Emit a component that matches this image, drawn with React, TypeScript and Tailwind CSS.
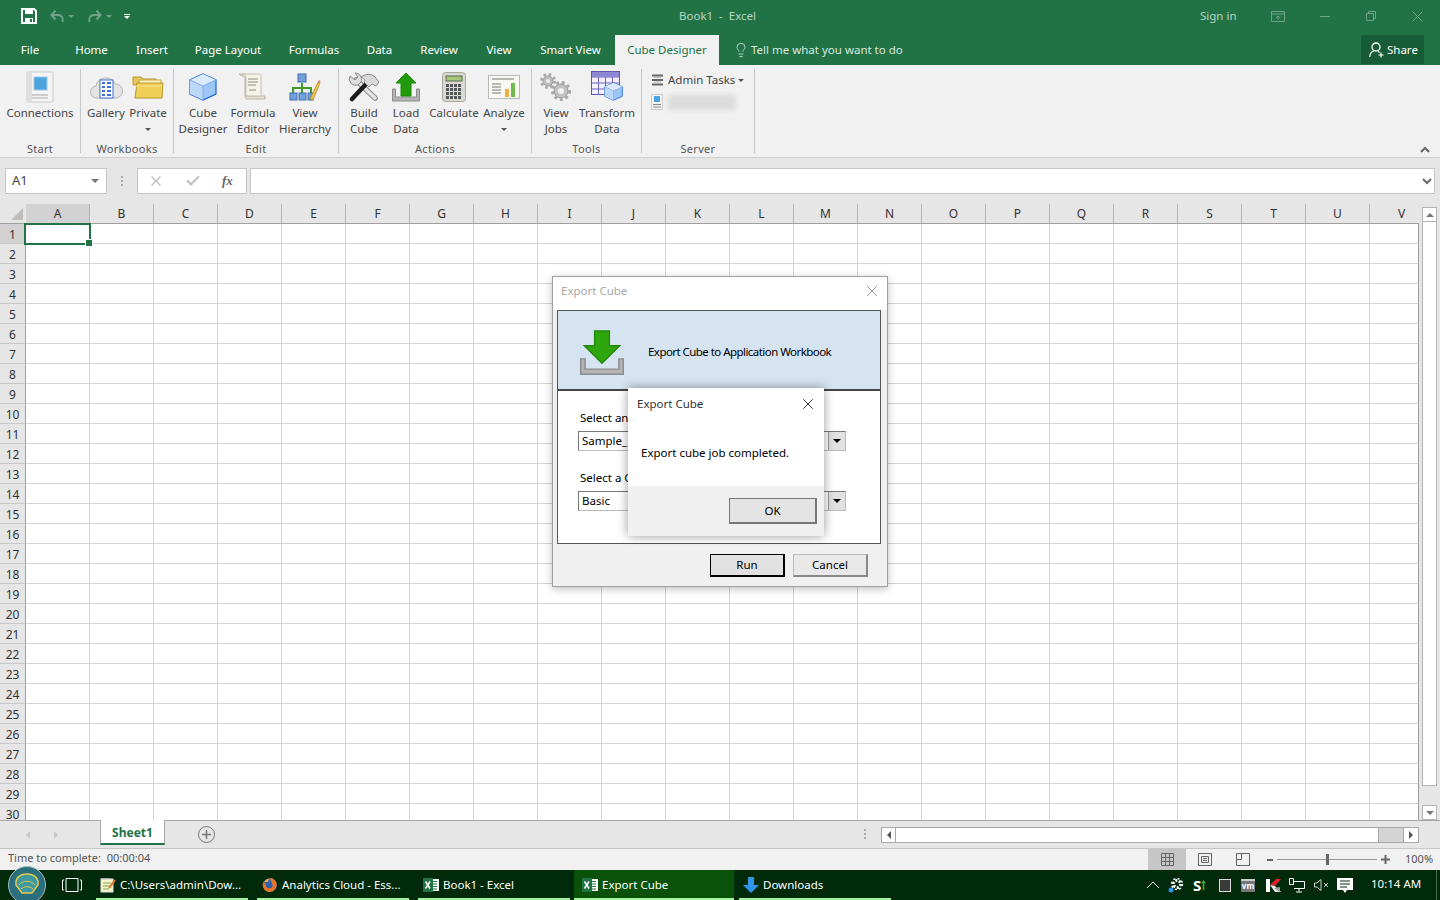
import React from "react"
import { Check, Lightbulb, X } from "lucide-react"

const columns = "ABCDEFGHIJKLMNOPQRSTUV".split("")
const rows = Array.from({ length: 30 }, (_, i) => i + 1)

const tabs = [
  { label: "File", w: "w-[60px]" },
  { label: "Home", w: "w-[63px]" },
  { label: "Insert", w: "w-[58px]" },
  { label: "Page Layout", w: "w-[94px]" },
  { label: "Formulas", w: "w-[78px]" },
  { label: "Data", w: "w-[53px]" },
  { label: "Review", w: "w-[66px]" },
  { label: "View", w: "w-[54px]" },
  { label: "Smart View", w: "w-[89px]" },
]

function SaveIcon() {
  return (
    <svg width="16" height="16" viewBox="0 0 16 16">
      <path d="M1 1h12l2 2v12H1z" fill="none" stroke="#fff" strokeWidth="2" />
      <rect x="4" y="1" width="8" height="5" fill="#fff" />
      <rect x="4" y="10" width="8" height="5" fill="#fff" />
      <rect x="9" y="11" width="2" height="3" fill="#217346" />
    </svg>
  )
}

function UndoIcon({ flip }: { flip?: boolean }) {
  return (
    <svg width="14" height="14" viewBox="0 0 14 14" className={flip ? "-scale-x-100" : ""}>
      <path d="M12.5 13c1-4-1-7-4.500-7H2M5.500 1.500 1.500 6l4 4.500" fill="none" stroke="#6fa287" strokeWidth="2" />
    </svg>
  )
}

function Caret({ className }: { className: string }) {
  return <span className={`inline-block w-0 h-0 border-x-[3px] border-x-transparent border-t-[3px] ${className}`} />
}

function ConnectionsIcon() {
  return (
    <svg width="28" height="32" viewBox="0 0 28 32">
      <rect x="1" y="1" width="26" height="30" rx="1" fill="#f4f4f4" stroke="#c9c9c9" />
      <rect x="1" y="1" width="5" height="30" fill="#dedede" />
      <rect x="8" y="6" width="13" height="13" fill="#4ca3e0" stroke="#9fc9e6" />
      <path d="M6 24h16M6 27h16" stroke="#a8a8a8" />
    </svg>
  )
}

function GalleryIcon() {
  return (
    <svg width="34" height="28" viewBox="0 0 34 28">
      <path d="M8 25a6 6 0 0 1-1-12 10 10 0 0 1 19-2 7 7 0 0 1 1 14z" fill="#e4e4e4" stroke="#b5b5b5" />
      <rect x="11" y="7" width="13" height="18" fill="#fff" stroke="#3f6fd1" />
      <path d="M13 10h3M18 10h4M13 14h3M18 14h4M13 18h3M18 18h4M13 22h3M18 22h4" stroke="#3f6fd1" strokeWidth="2" />
    </svg>
  )
}

function FolderIcon() {
  return (
    <svg width="32" height="26" viewBox="0 0 32 26">
      <path d="M1 3h8l2 2h13v6H1z" fill="#e8c65a" stroke="#b8962e" />
      <path d="M7 6h22v8H7z" fill="#fff4c4" stroke="#c9a83f" />
      <path d="M5 9h26l-1 15H3z" fill="#f1cf58" stroke="#b8962e" />
      <path d="M4 12h26" stroke="#fbe795" />
    </svg>
  )
}

function CubeIcon({ size = 28 }: { size?: number }) {
  return (
    <svg width={size} height={size} viewBox="0 0 28 28">
      <path d="M14 1 27 7v14l-13 6-13-6V7z" fill="#9cc6f5" stroke="#1d63d6" strokeWidth="1.200" />
      <path d="M14 1 27 7l-13 6L1 7z" fill="#dbeafc" />
      <path d="M14 13v14L1 21V7z" fill="#bcd8f8" />
      <path d="M1 7l13 6 13-6M14 13v14" fill="none" stroke="#7fb0ec" />
    </svg>
  )
}

function ScrollIcon() {
  return (
    <svg width="30" height="28" viewBox="0 0 30 28">
      <path d="M1 1h4c3 0 3 3 3 5v17h19v3H9c-2 0-2-2-2-3V6C7 4 6 3 4 3z" fill="#e5e2d4" stroke="#b8b5a6" />
      <path d="M4 1h17c2 0 2 2 2 3v19H8V6c0-2 0-5-4-5z" fill="#f6f4e9" stroke="#c3c0b0" />
      <path d="M10 6h10M10 9h10M10 12h8M11 17h7" stroke="#8a8a80" />
    </svg>
  )
}

function HierarchyIcon() {
  return (
    <svg width="32" height="28" viewBox="0 0 32 28">
      <path d="M13 10v5M4 22v-7h18v7M13 15v7" fill="none" stroke="#3f9a2a" strokeWidth="2" />
      <rect x="9" y="1" width="8" height="8" fill="#6f9fdc" stroke="#3f6fb0" />
      <rect x="1" y="20" width="7" height="7" fill="#6f9fdc" stroke="#3f6fb0" />
      <rect x="10" y="20" width="7" height="7" fill="#6f9fdc" stroke="#3f6fb0" />
      <rect x="19" y="20" width="5" height="7" fill="#6f9fdc" stroke="#3f6fb0" />
      <path d="M21 26 29 9l2 1-7 17z" fill="#f0c040" stroke="#9a7a20" strokeWidth=".6" />
      <path d="M29 9l.7-2 1.800.9-.5 2z" fill="#e07a9a" />
    </svg>
  )
}

function ToolsIcon() {
  return (
    <svg width="32" height="30" viewBox="0 0 32 30">
      {/* wrench */}
      <path d="M8 8 27 26" stroke="#8a8a8a" strokeWidth="5.500" strokeLinecap="round" />
      <path d="M8 8 27 26" stroke="#e4e4e4" strokeWidth="3.500" strokeLinecap="round" />
      <path d="M2 4a6.500 6.500 0 0 0 8 9l3-3a6.500 6.500 0 0 0-6-9l3 4-3 3z" fill="#dedede" stroke="#8a8a8a" />
      {/* hammer */}
      <path d="M4 27 19 11" stroke="#1c1c1c" strokeWidth="4.500" strokeLinecap="round" />
      <path d="M13 5c5-4 11-3 14 0l4 5-3 4-4-2-3 3-5-5 1-2c-1-1-2-2-4-3z" fill="#d8d8d8" stroke="#8a8a8a" />
    </svg>
  )
}

function ArrowTray() {
  return (
    <svg width="30" height="30" viewBox="0 0 30 30">
      <path d="M1.500 17v12h27V17h-3v8h-21v-8z" fill="#b4b4b4" stroke="#8c8c8c" />
      <path d="M15 1 25 11h-5v13h-10V11H5z" fill="#229a0a" stroke="#1a8a06" />
    </svg>
  )
}

function CalcIcon() {
  return (
    <svg width="24" height="30" viewBox="0 0 24 30">
      <rect x=".5" y=".5" width="23" height="29" rx="3" fill="#d9d9d2" stroke="#a8a8a0" />
      <rect x="4" y="4" width="16" height="5" fill="#a9c77a" stroke="#5f6b50" />
      {[12, 16, 20, 24].map((y) =>
        [4, 8, 12, 16].map((x) => <rect key={`${x}-${y}`} x={x} y={y} width="3" height="3" fill="#55585a" />)
      )}
    </svg>
  )
}

function AnalyzeIcon() {
  return (
    <svg width="32" height="24" viewBox="0 0 32 24">
      <rect x=".5" y=".5" width="31" height="23" fill="#f9f9f4" stroke="#b8b8b8" />
      <path d="M4 4h22M4 9h9M4 12h9M4 15h9M4 18h9" stroke="#777" />
      <rect x="17" y="14" width="4" height="8" fill="#eeb23a" />
      <rect x="23" y="8" width="4" height="14" fill="#6fbb52" />
    </svg>
  )
}

function GearsIcon() {
  return (
    <svg width="32" height="30" viewBox="0 0 32 30">
      <circle cx="8" cy="9" r="5" fill="#bdbdbd" stroke="#9a9a9a" strokeWidth="1" />
      <circle cx="8" cy="9" r="6.500" fill="none" stroke="#a8a8a8" strokeWidth="3" strokeDasharray="2.500 2.600" />
      <circle cx="8" cy="9" r="2" fill="#f1f1f1" />
      <circle cx="21" cy="19" r="7" fill="#c2c2c2" stroke="#9a9a9a" />
      <circle cx="21" cy="19" r="8.500" fill="none" stroke="#a8a8a8" strokeWidth="3" strokeDasharray="2.800 3" />
      <circle cx="21" cy="19" r="3" fill="#f1f1f1" />
    </svg>
  )
}

function TransformIcon() {
  return (
    <svg width="32" height="32" viewBox="0 0 32 32">
      <rect x=".5" y=".5" width="28" height="23" fill="#f3f0fb" stroke="#5d55ad" />
      <path d="M.5 6h28M.5 12h28M.5 18h28M7.500 0v24M14.500 0v24M21.500 0v24" stroke="#6d65bd" />
      <rect x="1" y="1" width="27" height="5" fill="#8f88d2" />
      <g transform="translate(13 11)">
        <CubeIcon size={19} />
      </g>
    </svg>
  )
}

function RibbonButton({ w, lines, caret, children }: { w: string; lines: string[]; caret?: boolean; children: React.ReactNode }) {
  return (
    <div className={`${w} flex flex-col items-center`}>
      <div className="h-[36px] flex items-center justify-center">{children}</div>
      <div className="text-[11.500px] leading-[16px] text-[#444] text-center whitespace-nowrap">
        {lines.map((l) => (
          <div key={l}>{l}</div>
        ))}
      </div>
      {caret && <Caret className="mt-[7px] border-t-[#555]" />}
    </div>
  )
}

function RibbonGroup({ w, pl, label, children }: { w: string; pl: string; label: string; children: React.ReactNode }) {
  return (
    <div className={`${w} ${pl} relative h-[84px] mt-[4px] border-r border-[#c6c6c6] shrink-0`}>
      <div className="flex">{children}</div>
      <div className="absolute left-0 right-0 bottom-[-3px] text-center text-[11px] leading-[14px] tracking-[0.3px] text-[#555]">{label}</div>
    </div>
  )
}

function Ribbon() {
  return (
    <div className="h-[93px] bg-[#f1f1f1] border-b border-[#d0d0d0] flex shrink-0 relative">
      <RibbonGroup w="w-[81px]" pl="pl-[4px]" label="Start">
        <RibbonButton w="w-[72px]" lines={["Connections"]}>
          <ConnectionsIcon />
        </RibbonButton>
      </RibbonGroup>
      <RibbonGroup w="w-[93px]" pl="pl-[4px]" label="Workbooks">
        <RibbonButton w="w-[42px]" lines={["Gallery"]}>
          <GalleryIcon />
        </RibbonButton>
        <RibbonButton w="w-[42px]" lines={["Private"]} caret>
          <FolderIcon />
        </RibbonButton>
      </RibbonGroup>
      <RibbonGroup w="w-[165px]" pl="pl-[4px]" label="Edit">
        <RibbonButton w="w-[50px]" lines={["Cube", "Designer"]}>
          <CubeIcon />
        </RibbonButton>
        <RibbonButton w="w-[50px]" lines={["Formula", "Editor"]}>
          <ScrollIcon />
        </RibbonButton>
        <RibbonButton w="w-[54px]" lines={["View", "Hierarchy"]}>
          <HierarchyIcon />
        </RibbonButton>
      </RibbonGroup>
      <RibbonGroup w="w-[193px]" pl="pl-[4px]" label="Actions">
        <RibbonButton w="w-[42px]" lines={["Build", "Cube"]}>
          <ToolsIcon />
        </RibbonButton>
        <RibbonButton w="w-[42px]" lines={["Load", "Data"]}>
          <ArrowTray />
        </RibbonButton>
        <RibbonButton w="w-[54px]" lines={["Calculate"]}>
          <CalcIcon />
        </RibbonButton>
        <RibbonButton w="w-[46px]" lines={["Analyze"]} caret>
          <AnalyzeIcon />
        </RibbonButton>
      </RibbonGroup>
      <RibbonGroup w="w-[110px]" pl="pl-[4px]" label="Tools">
        <RibbonButton w="w-[40px]" lines={["View", "Jobs"]}>
          <GearsIcon />
        </RibbonButton>
        <RibbonButton w="w-[62px]" lines={["Transform", "Data"]}>
          <TransformIcon />
        </RibbonButton>
      </RibbonGroup>
      <RibbonGroup w="w-[113px]" pl="pl-[9px]" label="Server">
        <div className="flex flex-col">
          <div className="flex items-center h-[18px] mt-[2px] text-[11.500px] text-[#444]">
            <svg width="13" height="12" viewBox="0 0 13 12" className="mr-[4px]">
              <path d="M1 1.500h11M1 6h11M1 10.500h11" stroke="#666" strokeWidth="2" />
              <path d="M3 3.500h7M3 8h7" stroke="#bbb" />
            </svg>
            Admin Tasks
            <Caret className="ml-[3px] border-t-[#555]" />
          </div>
          <div className="flex items-center mt-[5px]">
            <svg width="12" height="16" viewBox="0 0 12 16">
              <rect x=".5" y=".5" width="11" height="15" fill="#f4f4f4" stroke="#ccc" />
              <rect x="3" y="2" width="6" height="6" fill="#4ca3e0" />
              <path d="M2 10.500h8M2 13h8" stroke="#888" />
            </svg>
            <div className="ml-[5px] w-[68px] h-[15px] bg-[#dcdcdc] blur-[2px]" />
          </div>
        </div>
      </RibbonGroup>
      <svg width="10" height="7" viewBox="0 0 10 7" className="absolute right-[10px] bottom-[4px]">
        <path d="M1 6 5 2l4 4" fill="none" stroke="#666" strokeWidth="2" />
      </svg>
    </div>
  )
}

function FormulaBar() {
  return (
    <div className="h-[46px] bg-[#e6e6e6] shrink-0 flex items-start pt-[10px] pl-[5px] pr-[5px]">
      <div className="w-[102px] h-[26px] bg-white border border-[#c6c6c6] flex items-center justify-between pl-[6px] pr-[7px] text-[13px] text-[#444]">
        A1
        <Caret className="!border-x-[4px] !border-t-[4px] border-t-[#777]" />
      </div>
      <div className="w-[30px] h-[26px] flex flex-col items-center justify-center gap-[2px]">
        <span className="w-[2px] h-[2px] bg-[#aaa]" />
        <span className="w-[2px] h-[2px] bg-[#aaa]" />
        <span className="w-[2px] h-[2px] bg-[#aaa]" />
      </div>
      <div className="w-[110px] h-[26px] bg-white border border-[#c6c6c6] flex items-center text-[#c4c4c4]">
        <X size={16} strokeWidth={2.500} className="ml-[10px]" />
        <Check size={16} strokeWidth={3.500} className="ml-[21px]" />
        <span className="ml-[21px] font-['Liberation_Serif',serif] italic font-bold text-[13px] text-[#666]">fx</span>
      </div>
      <div className="ml-[3px] flex-1 h-[26px] bg-white border border-[#c6c6c6] flex items-center justify-end pr-[2px]">
        <svg width="10" height="7" viewBox="0 0 10 7">
          <path d="M1 1l4 4 4-4" fill="none" stroke="#666" strokeWidth="2" />
        </svg>
      </div>
    </div>
  )
}

function Sheet() {
  return (
    <div className="flex-1 min-h-0 flex bg-[#e6e6e6]">
      <div className="w-[1419px] overflow-hidden relative">
        <div className="flex h-[20px] border-b border-[#9f9f9f]">
          <div className="w-[26px] shrink-0 relative">
            <span className="absolute right-[3px] bottom-[3px] w-0 h-0 border-l-[12px] border-l-transparent border-b-[12px] border-b-[#bdbdbd]" />
          </div>
          {columns.map((c) => (
            <div
              key={c}
              className={`w-[64px] shrink-0 border-r border-[#b4b4b4] flex items-center justify-center text-[12px] text-[#333] ${c === "A" ? "bg-[#d2d2d2]" : ""}`}
            >
              {c}
            </div>
          ))}
        </div>
        {rows.map((r) => (
          <div key={r} className="flex h-[20px] bg-white">
            <div className={`w-[26px] shrink-0 border-r border-[#9f9f9f] border-b border-b-[#c8c8c8] flex items-center justify-center pt-[2px] text-[12px] text-[#333] ${r === 1 ? "bg-[#d2d2d2] text-[#7a6a20]" : "bg-[#e6e6e6]"}`}>
              {r}
            </div>
            {columns.map((c) => (
              <div key={c} className="w-[64px] shrink-0 border-r border-b border-[#d4d4d4]" />
            ))}
          </div>
        ))}
        <div className="absolute left-[24px] top-[19px] w-[67px] h-[22px] border-2 border-[#217346]">
          <span className="absolute right-[-4px] bottom-[-4px] w-[6px] h-[6px] bg-[#217346] border border-white box-content" />
        </div>
        <div className="absolute right-0 top-[19px] bottom-0 w-px bg-[#9f9f9f]" />
      </div>
      <div className="flex-1 flex flex-col items-center pt-[3px]">
        <div className="w-[15px] h-[15px] bg-white border border-[#b4b4b4] flex items-center justify-center">
          <span className="w-0 h-0 border-x-[4px] border-x-transparent border-b-[4px] border-b-[#777]" />
        </div>
        <div className="w-[15px] h-[564px] bg-white border border-[#b4b4b4] border-t-0" />
        <div className="flex-1" />
        <div className="w-[15px] h-[15px] bg-white border border-[#b4b4b4] flex items-center justify-center">
          <Caret className="!border-x-[4px] !border-t-[4px] border-t-[#777]" />
        </div>
      </div>
    </div>
  )
}

function SheetTabs() {
  return (
    <div className="h-[29px] shrink-0 bg-[#e6e6e6] border-y border-[#a8a8a8] border-b-[#c6c6c6] flex items-start">
      <div className="w-[100px] h-full flex items-center pl-[26px] gap-[24px]">
        <span className="w-0 h-0 border-y-[4px] border-y-transparent border-r-[4px] border-r-[#c8c8c8]" />
        <span className="w-0 h-0 border-y-[4px] border-y-transparent border-l-[4px] border-l-[#c8c8c8]" />
      </div>
      <div className="w-[65px] h-[25px] -mt-px bg-white border-x border-[#a8a8a8] border-b-2 border-b-[#217346] flex items-center justify-center pt-[3px] text-[12px] font-bold text-[#217346]">
        Sheet1
      </div>
      <div className="w-[17px] h-[17px] ml-[33px] mt-[5px] rounded-full border border-[#777] flex items-center justify-center text-[#777]">
        <svg width="9" height="9" viewBox="0 0 9 9">
          <path d="M4.500 0v9M0 4.500h9" stroke="#777" strokeWidth="1.500" />
        </svg>
      </div>
      <div className="ml-[649px] mt-[8px] flex flex-col gap-[2px]">
        <span className="w-[2px] h-[2px] bg-[#aaa]" />
        <span className="w-[2px] h-[2px] bg-[#aaa]" />
        <span className="w-[2px] h-[2px] bg-[#aaa]" />
      </div>
      <div className="ml-[15px] mt-[6px] w-[538px] h-[16px] flex bg-[#d4d4d4] border border-[#a8a8a8]">
        <div className="w-[14px] bg-white border-r border-[#a8a8a8] flex items-center justify-center">
          <span className="w-0 h-0 border-y-[4px] border-y-transparent border-r-[4px] border-r-[#555]" />
        </div>
        <div className="w-[483px] bg-white border-r border-[#a8a8a8]" />
        <div className="flex-1" />
        <div className="w-[15px] bg-white border-l border-[#a8a8a8] flex items-center justify-center">
          <span className="w-0 h-0 border-y-[4px] border-y-transparent border-l-[4px] border-l-[#555]" />
        </div>
      </div>
    </div>
  )
}

function StatusBar() {
  return (
    <div className="h-[21px] shrink-0 bg-[#f1f1f1] flex items-center text-[11px] text-[#555]">
      <div className="pl-[8px] pb-[2px] w-[1148px] whitespace-pre">Time to complete:  00:00:04</div>
      <div className="w-[38px] h-full bg-[#c6c6c6] flex items-center justify-center">
        <svg width="13" height="13" viewBox="0 0 13 13">
          <path d="M.5.5h12v12H.5zM4.500.5v12M8.500.5v12M.5 4.500h12M.5 8.500h12" fill="none" stroke="#666" />
        </svg>
      </div>
      <div className="w-[38px] flex justify-center">
        <svg width="14" height="13" viewBox="0 0 14 13">
          <path d="M.5.5h13v12H.5zM3.500 3.500h7v6h-7zM5 5.500h4M5 7.500h4" fill="none" stroke="#666" />
        </svg>
      </div>
      <div className="w-[38px] flex justify-center">
        <svg width="14" height="13" viewBox="0 0 14 13">
          <path d="M.5.500h13v12H.5zM5.500.5v6h-5" fill="none" stroke="#666" />
        </svg>
      </div>
      <span className="ml-[5px] w-[6px] h-[2px] bg-[#666]" />
      <div className="ml-[4px] w-[100px] h-px bg-[#999] relative">
        <span className="absolute left-[49px] top-[-5px] w-[3px] h-[11px] bg-[#666]" />
      </div>
      <svg width="9" height="9" viewBox="0 0 9 9" className="ml-[4px]">
        <path d="M4.500 0v9M0 4.500h9" stroke="#666" strokeWidth="2" />
      </svg>
      <span className="ml-[15px] pb-[1px]">100%</span>
    </div>
  )
}

function NotepadIcon() {
  return (
    <svg width="16" height="16" viewBox="0 0 16 16">
      <rect x="1" y="2" width="12" height="13" fill="#f8f6c8" stroke="#ddd" />
      <path d="M2 1v2M4 1v2M6 1v2M8 1v2M10 1v2" stroke="#ccc" />
      <path d="M3 6h8M3 9h8M3 12h6" stroke="#7fa65a" />
      <path d="M9 11 15 3" stroke="#e0762a" strokeWidth="2" />
    </svg>
  )
}

function FirefoxIcon() {
  return (
    <svg width="16" height="16" viewBox="0 0 16 16">
      <circle cx="8" cy="8" r="7" fill="#2f5fa8" />
      <path d="M8 1a7 7 0 1 1-6 3c0 2 1 2 2 3-1 3 2 5 5 4 2-1 2-3 1-4 0-2-2-4-2-6z" fill="#e8742a" />
      <path d="M2 5c2-3 5-4 7-3-2 0-3 1-3 3z" fill="#f3b33d" />
    </svg>
  )
}

function ExcelIcon() {
  return (
    <svg width="16" height="16" viewBox="0 0 16 16">
      <rect x="7" y="2" width="9" height="12" fill="#fff" />
      <path d="M9 4.500h5M9 7h5M9 9.500h5M9 12h5" stroke="#217346" />
      <rect x="0" y="1" width="10" height="14" fill="#217346" />
      <path d="M2.500 4.500 7 11.500M7 4.500l-4.500 7" stroke="#fff" strokeWidth="1.500" />
    </svg>
  )
}

function TaskItem({ w, ml, pl, active, icon, label }: { w: string; ml: string; pl: string; active?: boolean; icon: React.ReactNode; label: string }) {
  return (
    <div className={`${w} ${ml} ${pl} h-full relative flex items-center gap-[4px] text-[11.500px] text-white whitespace-nowrap ${active ? "bg-[#0a520a]" : ""}`}>
      {icon}
      {label}
      <span className="absolute left-0 right-0 bottom-0 h-[2px] bg-[#a0f5a0]" />
    </div>
  )
}

function Taskbar() {
  return (
    <div className="h-[30px] shrink-0 bg-[#002a0a] flex items-center relative">
      <svg width="38" height="38" viewBox="0 0 38 38" className="absolute left-[8px] top-[-4px]">
        <circle cx="19" cy="19" r="18.500" fill="#2a6f7e" stroke="#a6bcc0" />
        <path d="M19 8c-7 0-12 4-11 11l6 8h10l6-8c1-7-4-11-11-11z" fill="#3f9aa0" stroke="#e6c84e" strokeWidth="1.500" />
        <path d="M11 19c4-5 12-5 16 0M13 23c3-3 9-3 12 0" fill="none" stroke="#e6c84e" />
      </svg>
      <div className="w-[54px]" />
      <svg width="20" height="14" viewBox="0 0 20 14" className="ml-[8px]">
        <path d="M4 .5h12v13H4z" fill="none" stroke="#fff" />
        <path d="M2 2H.5v10H2M18 2h1.500v10H18" fill="none" stroke="#fff" />
      </svg>
      <TaskItem w="w-[152px]" ml="ml-[14px]" pl="pl-[4px]" icon={<NotepadIcon />} label="C:\Users\admin\Dow..." />
      <TaskItem w="w-[152px]" ml="ml-[9px]" pl="pl-[5px]" icon={<FirefoxIcon />} label="Analytics Cloud - Ess..." />
      <TaskItem w="w-[152px]" ml="ml-[9px]" pl="pl-[5px]" icon={<ExcelIcon />} label="Book1 - Excel" />
      <TaskItem w="w-[160px]" ml="ml-[4px]" pl="pl-[8px]" active icon={<ExcelIcon />} label="Export Cube" />
      <TaskItem
        w="w-[152px]"
        ml="ml-[5px]"
        pl="pl-[4px]"
        icon={
          <svg width="16" height="16" viewBox="0 0 16 16">
            <path d="M5 0h6v8h5l-8 8-8-8h5z" fill="#2f95ea" />
          </svg>
        }
        label="Downloads"
      />
      <svg width="14" height="8" viewBox="0 0 14 8" className="ml-[255px]">
        <path d="M1 7l6-6 6 6" fill="none" stroke="#fff" />
      </svg>
      <svg width="16" height="16" viewBox="0 0 16 16" className="ml-[8px]">
        <circle cx="9" cy="7" r="3.500" fill="none" stroke="#fff" strokeWidth="3" strokeDasharray="2 1.600" />
        <circle cx="9" cy="7" r="5.500" fill="none" stroke="#fff" strokeWidth="1.500" strokeDasharray="2 2.300" />
        <circle cx="3" cy="13" r="2.500" fill="#2f95ea" />
      </svg>
      <div className="ml-[9px] w-[14px] flex items-center">
        <span className="text-[15px] leading-none font-bold text-white">S</span>
        <svg width="5" height="12" viewBox="0 0 6 12">
          <path d="M3 0l3 4H4v8H2V4H0z" fill="#3fa63f" />
        </svg>
      </div>
      <div className="ml-[12px] w-[12px] h-[13px] bg-[#3a3a3a] border border-[#ddd]" />
      <div className="ml-[10px] w-[14px] h-[13px] bg-[#777] border-t-2 border-[#ccc] text-[8px] leading-[9px] text-white text-center font-bold">vm</div>
      <svg width="15" height="15" viewBox="0 0 15 15" className="ml-[11px]">
        <path d="M0 1h4v13H0z" fill="#fff" />
        <path d="M4 7l6-6h5L9 8z" fill="#e0202a" />
        <path d="M4 7l5 1 6 6h-6z" fill="#e8e8e8" />
        <path d="M8 10l6 4V9z" fill="#999" />
      </svg>
      <svg width="16" height="15" viewBox="0 0 16 15" className="ml-[8px]">
        <path d="M.5.5h4v6h-4zM5 3.500h10.500v7H5M10 10.500v3M7 14h6" fill="none" stroke="#fff" />
      </svg>
      <svg width="15" height="12" viewBox="0 0 15 12" className="ml-[9px]">
        <path d="M.5 4h2.500L7 .5v11L3 8H.5z" fill="none" stroke="#ccc" />
        <path d="M10 4l4 4M14 4l-4 4" stroke="#ccc" />
      </svg>
      <svg width="16" height="15" viewBox="0 0 16 15" className="ml-[8px]">
        <path d="M0 0h16v12h-6l-2 3-2-3H0z" fill="#fff" />
        <path d="M3 3h10M3 6h10M3 9h7" stroke="#002a0a" />
      </svg>
      <span className="ml-[18px] pb-[2px] text-[11.500px] text-white whitespace-nowrap">10:14 AM</span>
      <span className="absolute right-[3px] top-0 w-px h-full bg-[#4a6a50]" />
    </div>
  )
}

function ComboBox({ value }: { value: string }) {
  return (
    <div className="h-[20px] bg-white border border-t-[#777] border-l-[#777] border-r-[#bbb] border-b-[#bbb] flex items-center justify-between pl-[3px] text-[11.500px] text-black">
      {value}
      <div className="w-[17px] h-[18px] bg-[#e1e1e1] border-l border-[#999] flex items-center justify-center">
        <Caret className="!border-x-[4px] !border-t-[4px] border-t-black" />
      </div>
    </div>
  )
}

function ExportDialog() {
  return (
    <div className="absolute left-[552px] top-[276px] w-[336px] h-[311px] bg-[#f0f0f0] border border-[#a0a0a0] shadow-[0_2px_8px_rgba(0,0,0,0.25)] flex flex-col text-black">
      <div className="h-[28px] bg-white flex items-center justify-between pl-[8px] pr-[6px] text-[11.500px] text-[#aaa] shrink-0">
        Export Cube
        <X size={18} strokeWidth={1} className="text-[#777]" />
      </div>
      <div className="h-[5px] bg-white shrink-0" />
      <div className="ml-[4px] mr-[6px] h-[234px] bg-white border border-[#555] shrink-0">
        <div className="h-[80px] bg-[#d6e3f0] border-b-2 border-[#444] flex items-center pl-[22px]">
          <svg width="44" height="46" viewBox="0 0 30 30" className="mt-[6px]">
            <path d="M.5 19v10.500h29V19h-3v7h-23v-7z" fill="#b4b4b4" stroke="#8c8c8c" />
            <path d="M10 0h10v10h7L15 22 3 10h7z" fill="#2ea60e" stroke="#1f8a08" />
          </svg>
          <span className="ml-[24px] mt-[3px] text-[11.500px] tracking-[-0.55px] text-black whitespace-nowrap">Export Cube to Application Workbook</span>
        </div>
        <div className="pl-[20px] pr-[34px] pt-[19px]">
          <div className="pl-[2px] text-[11.500px] leading-[16px]">Select an</div>
          <div className="mt-[5px]">
            <ComboBox value="Sample_D" />
          </div>
          <div className="pl-[2px] text-[11.500px] leading-[16px] mt-[19px]">Select a C</div>
          <div className="mt-[5px]">
            <ComboBox value="Basic" />
          </div>
        </div>
      </div>
      <div className="flex justify-end gap-[8px] mt-[10px] pr-[19px]">
        <div className="w-[75px] h-[23px] bg-[#e1e1e1] border border-black border-r-2 border-b-2 flex items-center justify-center text-[11.500px]">Run</div>
        <div className="w-[75px] h-[23px] bg-[#e9e9e9] border border-[#bbb] border-r-2 border-b-2 border-r-[#888] border-b-[#888] flex items-center justify-center text-[11.500px]">Cancel</div>
      </div>
    </div>
  )
}

function CompletedDialog() {
  return (
    <div className="absolute left-[628px] top-[388px] w-[196px] h-[148px] bg-white shadow-[0_0_10px_rgba(0,0,0,0.4)] flex flex-col text-black">
      <div className="h-[98px] shrink-0">
        <div className="flex items-center justify-between h-[32px] pl-[9px] pr-[7px] text-[11.500px] text-[#333]">
          Export Cube
          <X size={18} strokeWidth={1.100} className="text-black" />
        </div>
        <div className="mt-[25px] pl-[13px] text-[11.500px] leading-[16px] whitespace-nowrap">Export cube job completed.</div>
      </div>
      <div className="flex-1 bg-[#f0f0f0] flex justify-end items-start pt-[12px] pr-[7px]">
        <div className="w-[88px] h-[26px] bg-[#e4e4e4] border border-[#777] border-r-2 border-b-2 flex items-center justify-center text-[11.500px]">OK</div>
      </div>
    </div>
  )
}

function App() {
  return (
    <div className="w-[1440px] h-[900px] relative overflow-hidden flex flex-col bg-white font-['Noto_Sans',sans-serif]">
      {/* title bar */}
      <div className="h-[32px] bg-[#217346] shrink-0 flex items-center pl-[21px] text-[11.500px] text-[#b9d4c5]">
        <SaveIcon />
        <div className="ml-[13px]">
          <UndoIcon />
        </div>
        <Caret className="ml-[4px] border-t-[#6fa287]" />
        <div className="ml-[14px]">
          <UndoIcon flip />
        </div>
        <Caret className="ml-[4px] border-t-[#6fa287]" />
        <div className="ml-[12px] flex flex-col items-center gap-[1px]">
          <span className="w-[6px] h-px bg-white" />
          <Caret className="border-t-white" />
        </div>
        <div className="ml-[8px] w-[1062px] pl-[541px] whitespace-pre">Book1  -  Excel</div>
        <div className="w-[36px] whitespace-nowrap">Sign in</div>
        <svg width="14" height="11" viewBox="0 0 14 11" className="ml-[35px]">
          <path d="M.5.5h13v10H.5zM.5 3h13M7 9V5M5 7l2-2 2 2" fill="none" stroke="#6fa287" />
        </svg>
        <span className="ml-[35px] w-[10px] h-px bg-[#6fa287]" />
        <svg width="10" height="10" viewBox="0 0 10 10" className="ml-[36px]">
          <path d="M.5 2.500h7v7h-7zM2.500 2.500v-2h7v7h-2" fill="none" stroke="#6fa287" />
        </svg>
        <svg width="11" height="11" viewBox="0 0 11 11" className="ml-[36px]">
          <path d="M.5.5l10 10M10.500.5l-10 10" stroke="#6fa287" />
        </svg>
      </div>
      {/* tabs */}
      <div className="h-[33px] bg-[#217346] shrink-0 flex items-end text-[11.500px] text-white relative">
        {tabs.map((t) => (
          <div key={t.label} className={`${t.w} h-[33px] pt-[2px] flex items-center justify-center whitespace-nowrap`}>
            {t.label}
          </div>
        ))}
        <div className="w-[104px] h-[30px] bg-[#f1f1f1] text-[#217346] flex items-center justify-center whitespace-nowrap">Cube Designer</div>
        <div className="h-[33px] pt-[2px] ml-[14px] flex items-center gap-[2px] text-[#d8e8df] whitespace-nowrap">
          <Lightbulb size={16} strokeWidth={1.200} />
          Tell me what you want to do
        </div>
        <div className="absolute left-[1361px] top-[3px] w-[63px] h-[29px] bg-[#185c37] flex items-center pl-[8px] gap-[3px]">
          <svg width="15" height="16" viewBox="0 0 15 16">
            <circle cx="7" cy="5" r="4" fill="none" stroke="#fff" strokeWidth="1.300" />
            <path d="M.7 15c.3-3 2-5.500 4-6M9 9.500c.7.300 1.200.7 1.600 1.200M12 10.500v5M9.500 13h5" fill="none" stroke="#fff" strokeWidth="1.200" />
          </svg>
          Share
        </div>
      </div>
      <Ribbon />
      <FormulaBar />
      <Sheet />
      <SheetTabs />
      <StatusBar />
      <Taskbar />
      <ExportDialog />
      <CompletedDialog />
    </div>
  )
}

export default App
